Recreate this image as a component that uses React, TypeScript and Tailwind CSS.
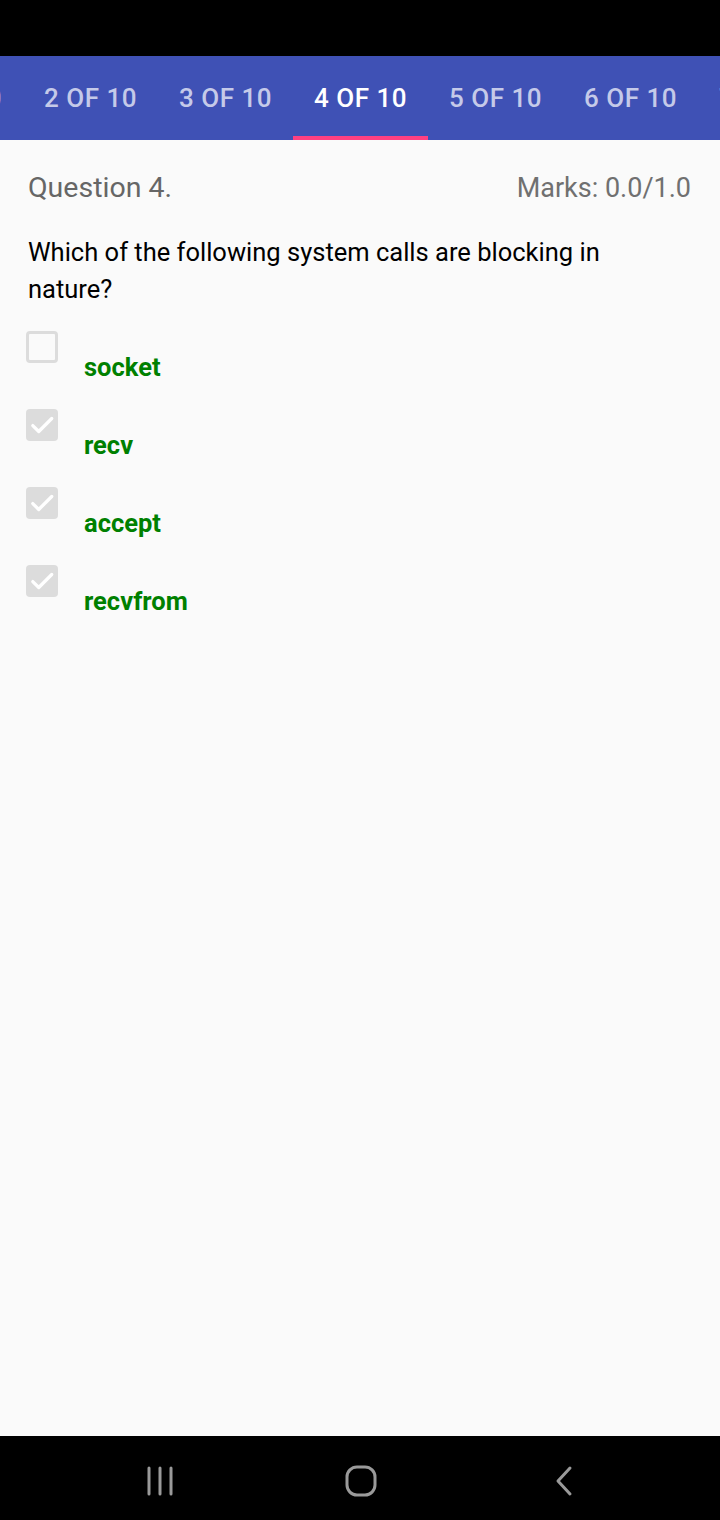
import React from 'react';

const tabs = ['1 OF 10', '2 OF 10', '3 OF 10', '4 OF 10', '5 OF 10', '6 OF 10', '7 OF 10'];

const options = [
  { label: 'socket', checked: false },
  { label: 'recv', checked: true },
  { label: 'accept', checked: true },
  { label: 'recvfrom', checked: true },
];

function Checkbox({ checked }: { checked: boolean }) {
  if (!checked) {
    return <div className="w-[32px] h-[32px] rounded-[4px] border-[3px] border-[#dcdcdc] bg-[#fafafa] shrink-0" />;
  }
  return (
    <div className="w-[32px] h-[32px] rounded-[4px] bg-[#dcdcdc] shrink-0 flex items-center justify-center">
      <svg width="26" height="26" viewBox="0 0 24 24" fill="none">
        <path d="M3.5 12.5l5.5 5.5L21 6" stroke="#ffffff" strokeWidth="3" strokeLinecap="round" strokeLinejoin="round" />
      </svg>
    </div>
  );
}

export default function App() {
  return (
    <div className="w-[720px] h-[1520px] bg-[#fafafa] flex flex-col overflow-hidden" style={{ fontFamily: 'Roboto, "Liberation Sans", sans-serif' }}>
      <div className="h-[56px] bg-black shrink-0" />

      {/* tab strip, scrolled so that tab 4 sits in the middle */}
      <div className="h-[84px] bg-[#3f51b5] shrink-0 flex overflow-hidden">
        <div className="flex ml-[-112px]">
          {tabs.map((t) => {
            const active = t === '4 OF 10';
            return (
              <div key={t} className="relative w-[135px] shrink-0 flex items-center justify-center">
                <span className={`text-[26px] font-medium tracking-[0.5px] whitespace-nowrap ${active ? 'text-white' : 'text-[#c5cae9]'}`}>{t}</span>
                {active && <div className="absolute bottom-0 left-0 right-0 h-[4px] bg-[#ff4081]" />}
              </div>
            );
          })}
        </div>
      </div>

      <div className="flex-1 px-[28px]">
        <div className="flex justify-between items-center pt-[27px]">
          <span className="text-[28.5px] text-[#666666]">Question 4.</span>
          <span className="text-[27px] text-[#707070] mr-[1px]">Marks: 0.0/1.0</span>
        </div>

        <p className="mt-[24px] text-[25.5px] leading-[37px] text-black pr-[60px]">
          Which of the following system calls are blocking in nature?
        </p>

        <div className="mt-[23px] flex flex-col gap-[26px] ml-[-2px]">
          {options.map((o) => (
            <div key={o.label} className="flex items-start">
              <Checkbox checked={o.checked} />
              <span className="ml-[26px] mt-[20px] text-[25.5px] leading-[32px] font-bold text-[#008000]">{o.label}</span>
            </div>
          ))}
        </div>
      </div>

      <div className="h-[84px] bg-black shrink-0 flex items-center justify-around px-[40px] pt-[6px]">
        <svg width="28" height="30" viewBox="0 0 28 30" className="ml-[20px]">
          <g stroke="#9a9a9a" strokeWidth="3" strokeLinecap="round">
            <line x1="3" y1="2" x2="3" y2="28" />
            <line x1="14" y1="2" x2="14" y2="28" />
            <line x1="25" y1="2" x2="25" y2="28" />
          </g>
        </svg>
        <svg width="32" height="32" viewBox="0 0 32 32" className="mr-[6px]">
          <rect x="2" y="2" width="28" height="28" rx="10" fill="none" stroke="#9a9a9a" strokeWidth="3" />
        </svg>
        <svg width="20" height="32" viewBox="0 0 20 32" className="mr-[20px]">
          <path d="M16 3L4 16l12 13" fill="none" stroke="#9a9a9a" strokeWidth="3" strokeLinecap="round" strokeLinejoin="round" />
        </svg>
      </div>
    </div>
  );
}
